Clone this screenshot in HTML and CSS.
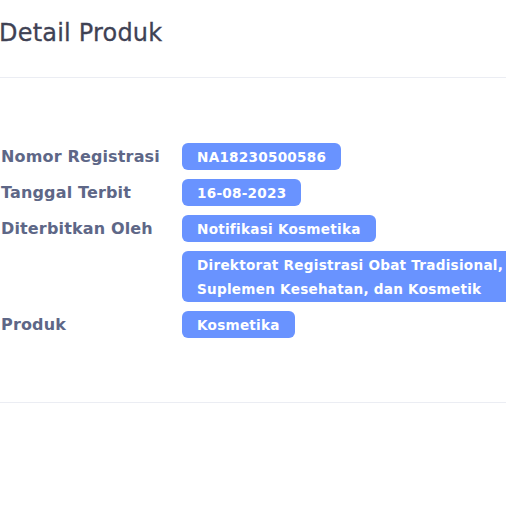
FILE: index.html
```html
<!DOCTYPE html>
<html lang="id">
<head>
<meta charset="utf-8">
<title>Detail Produk</title>
<link rel="stylesheet" href="styles.css">
</head>
<body>
<div class="card">
  <div class="card-header">
    <h3 class="card-title">Detail Produk</h3>
  </div>
  <div class="card-body">
    <div class="details">
      <div class="label">Nomor Registrasi</div>
      <div class="value"><span class="badge">NA18230500586</span></div>
      <div class="label">Tanggal Terbit</div>
      <div class="value"><span class="badge">16-08-2023</span></div>
      <div class="label">Diterbitkan Oleh</div>
      <div class="value"><span class="badge">Notifikasi Kosmetika</span></div>
      <div class="label"></div>
      <div class="value"><span class="badge">Direktorat Registrasi Obat Tradisional, Suplemen Kesehatan, dan Kosmetik</span></div>
      <div class="label">Produk</div>
      <div class="value"><span class="badge">Kosmetika</span></div>
    </div>
  </div>
</div>
</body>
</html>
```
FILE: styles.css
```css
html, body {
  margin: 0;
  padding: 0;
  background: #ffffff;
  overflow: hidden;
}
body {
  font-family: "DejaVu Sans", "Noto Sans", sans-serif;
}
.card {
  width: 560px;
  margin-left: -1px;
}
.card-header {
  height: 78px;
  border-bottom: 1px solid #ebedf3;
  display: flex;
  align-items: center;
  padding-bottom: 12px;
  box-sizing: border-box;
}
.card-title {
  margin: 0;
  font-size: 24px;
  font-weight: 400;
  letter-spacing: 0.2px;
  color: #3f4254;
  -webkit-text-stroke: 0.3px #3f4254;
}
.card-body {
  padding: 65px 0 64px 2px;
  border-bottom: 1px solid #ebedf3;
}
.details {
  display: grid;
  grid-template-columns: 181px 345px;
  row-gap: 9px;
  align-items: center;
}
.label {
  font-size: 16px;
  font-weight: 700;
  letter-spacing: 0.15px;
  color: #5e6787;
}
.value {
  display: flex;
}
.badge {
  display: inline-block;
  background: #6993ff;
  color: #ffffff;
  font-size: 13.6px;
  font-weight: 700;
  letter-spacing: 0.25px;
  line-height: 24px;
  padding: 1.5px 15px;
  border-radius: 6px;
}
```
